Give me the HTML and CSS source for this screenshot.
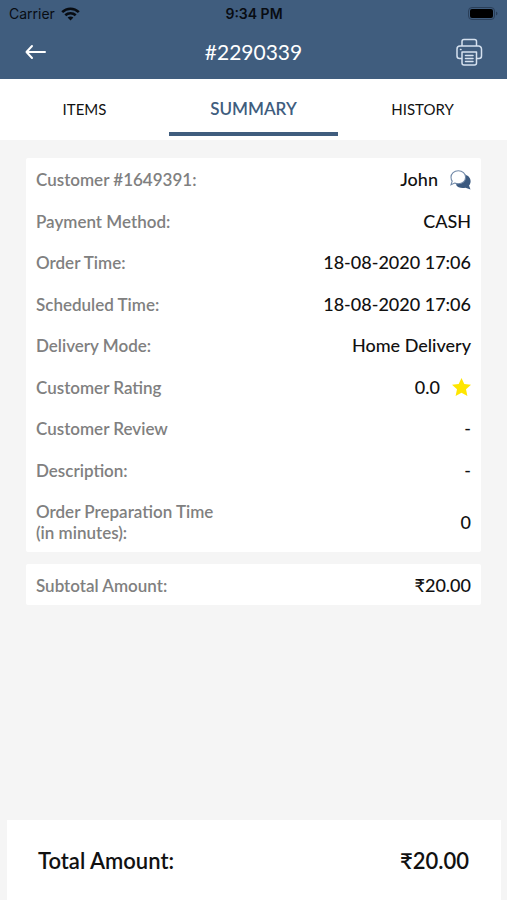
FILE: index.html
```html
<!DOCTYPE html>
<html lang="en">
<head>
<meta charset="utf-8">
<meta name="viewport" content="width=device-width, initial-scale=1">
<title>Order #2290339</title>
<link rel="stylesheet" href="styles.css">
</head>
<body>
<header class="top">
  <div class="status">
    <span class="carrier">Carrier
      <svg width="19" height="14" viewBox="0 0 19 14" fill="none" stroke="#080c12" stroke-width="2.6" aria-hidden="true"><path d="M1.2 5.2C5.8 .6 13.2 .6 17.8 5.2M4.3 8.3c2.9-2.8 7.5-2.8 10.4 0"/><path d="M9.5 13.6 6.6 10.6c1.6-1.5 4.2-1.5 5.8 0z" fill="#080c12" stroke="none"/></svg>
    </span>
    <span class="time">9:34 PM</span>
    <svg class="battery" width="31" height="14" viewBox="0 0 31 14" aria-hidden="true"><rect x=".5" y=".5" width="26" height="12" rx="3.5" fill="none" stroke="#2a3f59"/><rect x="2" y="2" width="23" height="9" rx="2" fill="#000"/><path d="M28 4.5c2 .7 2 3.3 0 4z" fill="#2a3f59"/></svg>
  </div>
  <div class="bar">
    <button class="icon-button" aria-label="Back">
      <svg width="22" height="16" viewBox="0 0 22 16" fill="none" stroke="#fff" stroke-width="2" stroke-linecap="round" stroke-linejoin="round"><path d="M21 8H2.500M8 2 2.500 8 8 14"/></svg>
    </button>
    <h1>#2290339</h1>
    <button class="icon-button" aria-label="Print">
      <svg width="28" height="28" viewBox="0 0 28 28" fill="none" stroke="#d5e1ef" stroke-width="1.500" stroke-linecap="round" stroke-linejoin="round"><path d="M7 8V3.500a2 2 0 0 1 2-2h10.500a2 2 0 0 1 2 2V8M7 20.500H4.500a2.500 2.500 0 0 1-2.500-2.500v-7a3 3 0 0 1 3-3h18.500a3 3 0 0 1 3 3v7a2.500 2.500 0 0 1-2.500 2.500h-2.500M7 14h14.500v11a2 2 0 0 1-2 2H9a2 2 0 0 1-2-2zM10.500 17.500H18M10.500 20.500H18M10.500 23.500H18M5.500 11.500h.5"/></svg>
    </button>
  </div>
</header>
<nav class="tabs">
  <a href="#items">ITEMS</a>
  <a href="#summary" class="active" aria-current="page">SUMMARY</a>
  <a href="#history">HISTORY</a>
</nav>
<main>
  <dl class="card">
    <div class="row"><dt>Customer #1649391:</dt><dd>John
      <svg width="21" height="20" viewBox="0 0 21 20" aria-hidden="true"><path d="M14 4.500c7 1 8 7.500 5 11l1.500 4-5-1.800c-4 .8-8 0-9.500-3z" fill="#3c5a80"/><path d="M8.300 .8c4.200 0 7.300 2.800 7.300 6.500s-3.100 6.500-7.300 6.500c-1.300 0-2.500-.3-3.600-.8L1 14.700l1.200-3.600C1.300 10 1 8.800 1 7.300 1 3.600 4.100.8 8.300.8z" fill="#fff" stroke="#7189a8" stroke-width="1.100"/></svg></dd></div>
    <div class="row"><dt>Payment Method:</dt><dd>CASH</dd></div>
    <div class="row"><dt>Order Time:</dt><dd>18-08-2020 17:06</dd></div>
    <div class="row"><dt>Scheduled Time:</dt><dd>18-08-2020 17:06</dd></div>
    <div class="row"><dt>Delivery Mode:</dt><dd>Home Delivery</dd></div>
    <div class="row"><dt>Customer Rating</dt><dd>0.0
      <svg width="19" height="18" viewBox="0 0 19 18" aria-hidden="true"><path d="M9.500 0 12.300 6 19 6.800 14 11.300 15.400 18 9.500 14.700 3.600 18 5 11.300 0 6.800 6.700 6z" fill="#ffe600"/></svg></dd></div>
    <div class="row"><dt>Customer Review</dt><dd>-</dd></div>
    <div class="row"><dt>Description:</dt><dd>-</dd></div>
    <div class="row"><dt>Order Preparation Time<br>(in minutes):</dt><dd>0</dd></div>
  </dl>
  <dl class="card">
    <div class="row"><dt>Subtotal Amount:</dt><dd>₹20.00</dd></div>
  </dl>
</main>
<footer class="total"><span>Total Amount:</span><span>₹20.00</span></footer>
</body>
</html>
```
FILE: styles.css
```css
* { box-sizing: border-box; }

body {
  margin: 0;
  min-height: 100vh;
  display: flex;
  flex-direction: column;
  background: #f5f5f5;
  color: #111;
  font-family: Lato, "Noto Sans", sans-serif;
}

.top { background: #405d7e; color: #fff; }

.status {
  display: grid;
  grid-template-columns: 1fr auto 1fr;
  align-items: center;
  height: 27px;
  padding: 0 8px 0 9px;
  color: #080c12;
  font-family: Inter, sans-serif;
  font-size: 14px;
}
.carrier { display: flex; align-items: center; gap: 6px; }
.time { font-weight: 600; }
.battery { justify-self: end; }

.bar {
  display: flex;
  align-items: center;
  justify-content: space-between;
  height: 52px;
  padding: 0 24px 2px;
}
.bar h1 { margin: 0; font-size: 21px; font-weight: 400; line-height: 22px; }
.icon-button {
  display: flex;
  width: 28px;
  padding: 0;
  border: 0;
  background: none;
}

.tabs {
  display: grid;
  grid-template-columns: repeat(3, 1fr);
  height: 61px;
  background: #fff;
}
.tabs a {
  display: flex;
  align-items: center;
  justify-content: center;
  height: 57px;
  padding-top: 6px;
  border-bottom: 4px solid transparent;
  color: #111;
  font-size: 15px;
  text-decoration: none;
}
.tabs .active { color: #405d7e; border-color: #405d7e; font-size: 17px; font-weight: 600; }

main {
  flex: 1;
  display: flex;
  flex-direction: column;
  gap: 12px;
  padding: 18px 26px;
}

.card { margin: 0; padding: 0 10px; background: #fff; border-radius: 2px; }
.row {
  display: flex;
  align-items: center;
  justify-content: space-between;
  min-height: 41px;
  padding: 11px 0 9px;
  line-height: 21px;
}
.row:nth-child(even) { min-height: 42px; }
dt { color: #808080; font-size: 17px; font-weight: 600; }
dd { display: flex; align-items: center; gap: 12px; margin: 0; font-size: 18px; font-weight: 500; }

.total {
  display: flex;
  align-items: center;
  justify-content: space-between;
  height: 80px;
  margin: 0 6px 0 7px;
  padding: 0 32px 0 31px;
  background: #fff;
  font-size: 22px;
  font-weight: 600;
}
```
